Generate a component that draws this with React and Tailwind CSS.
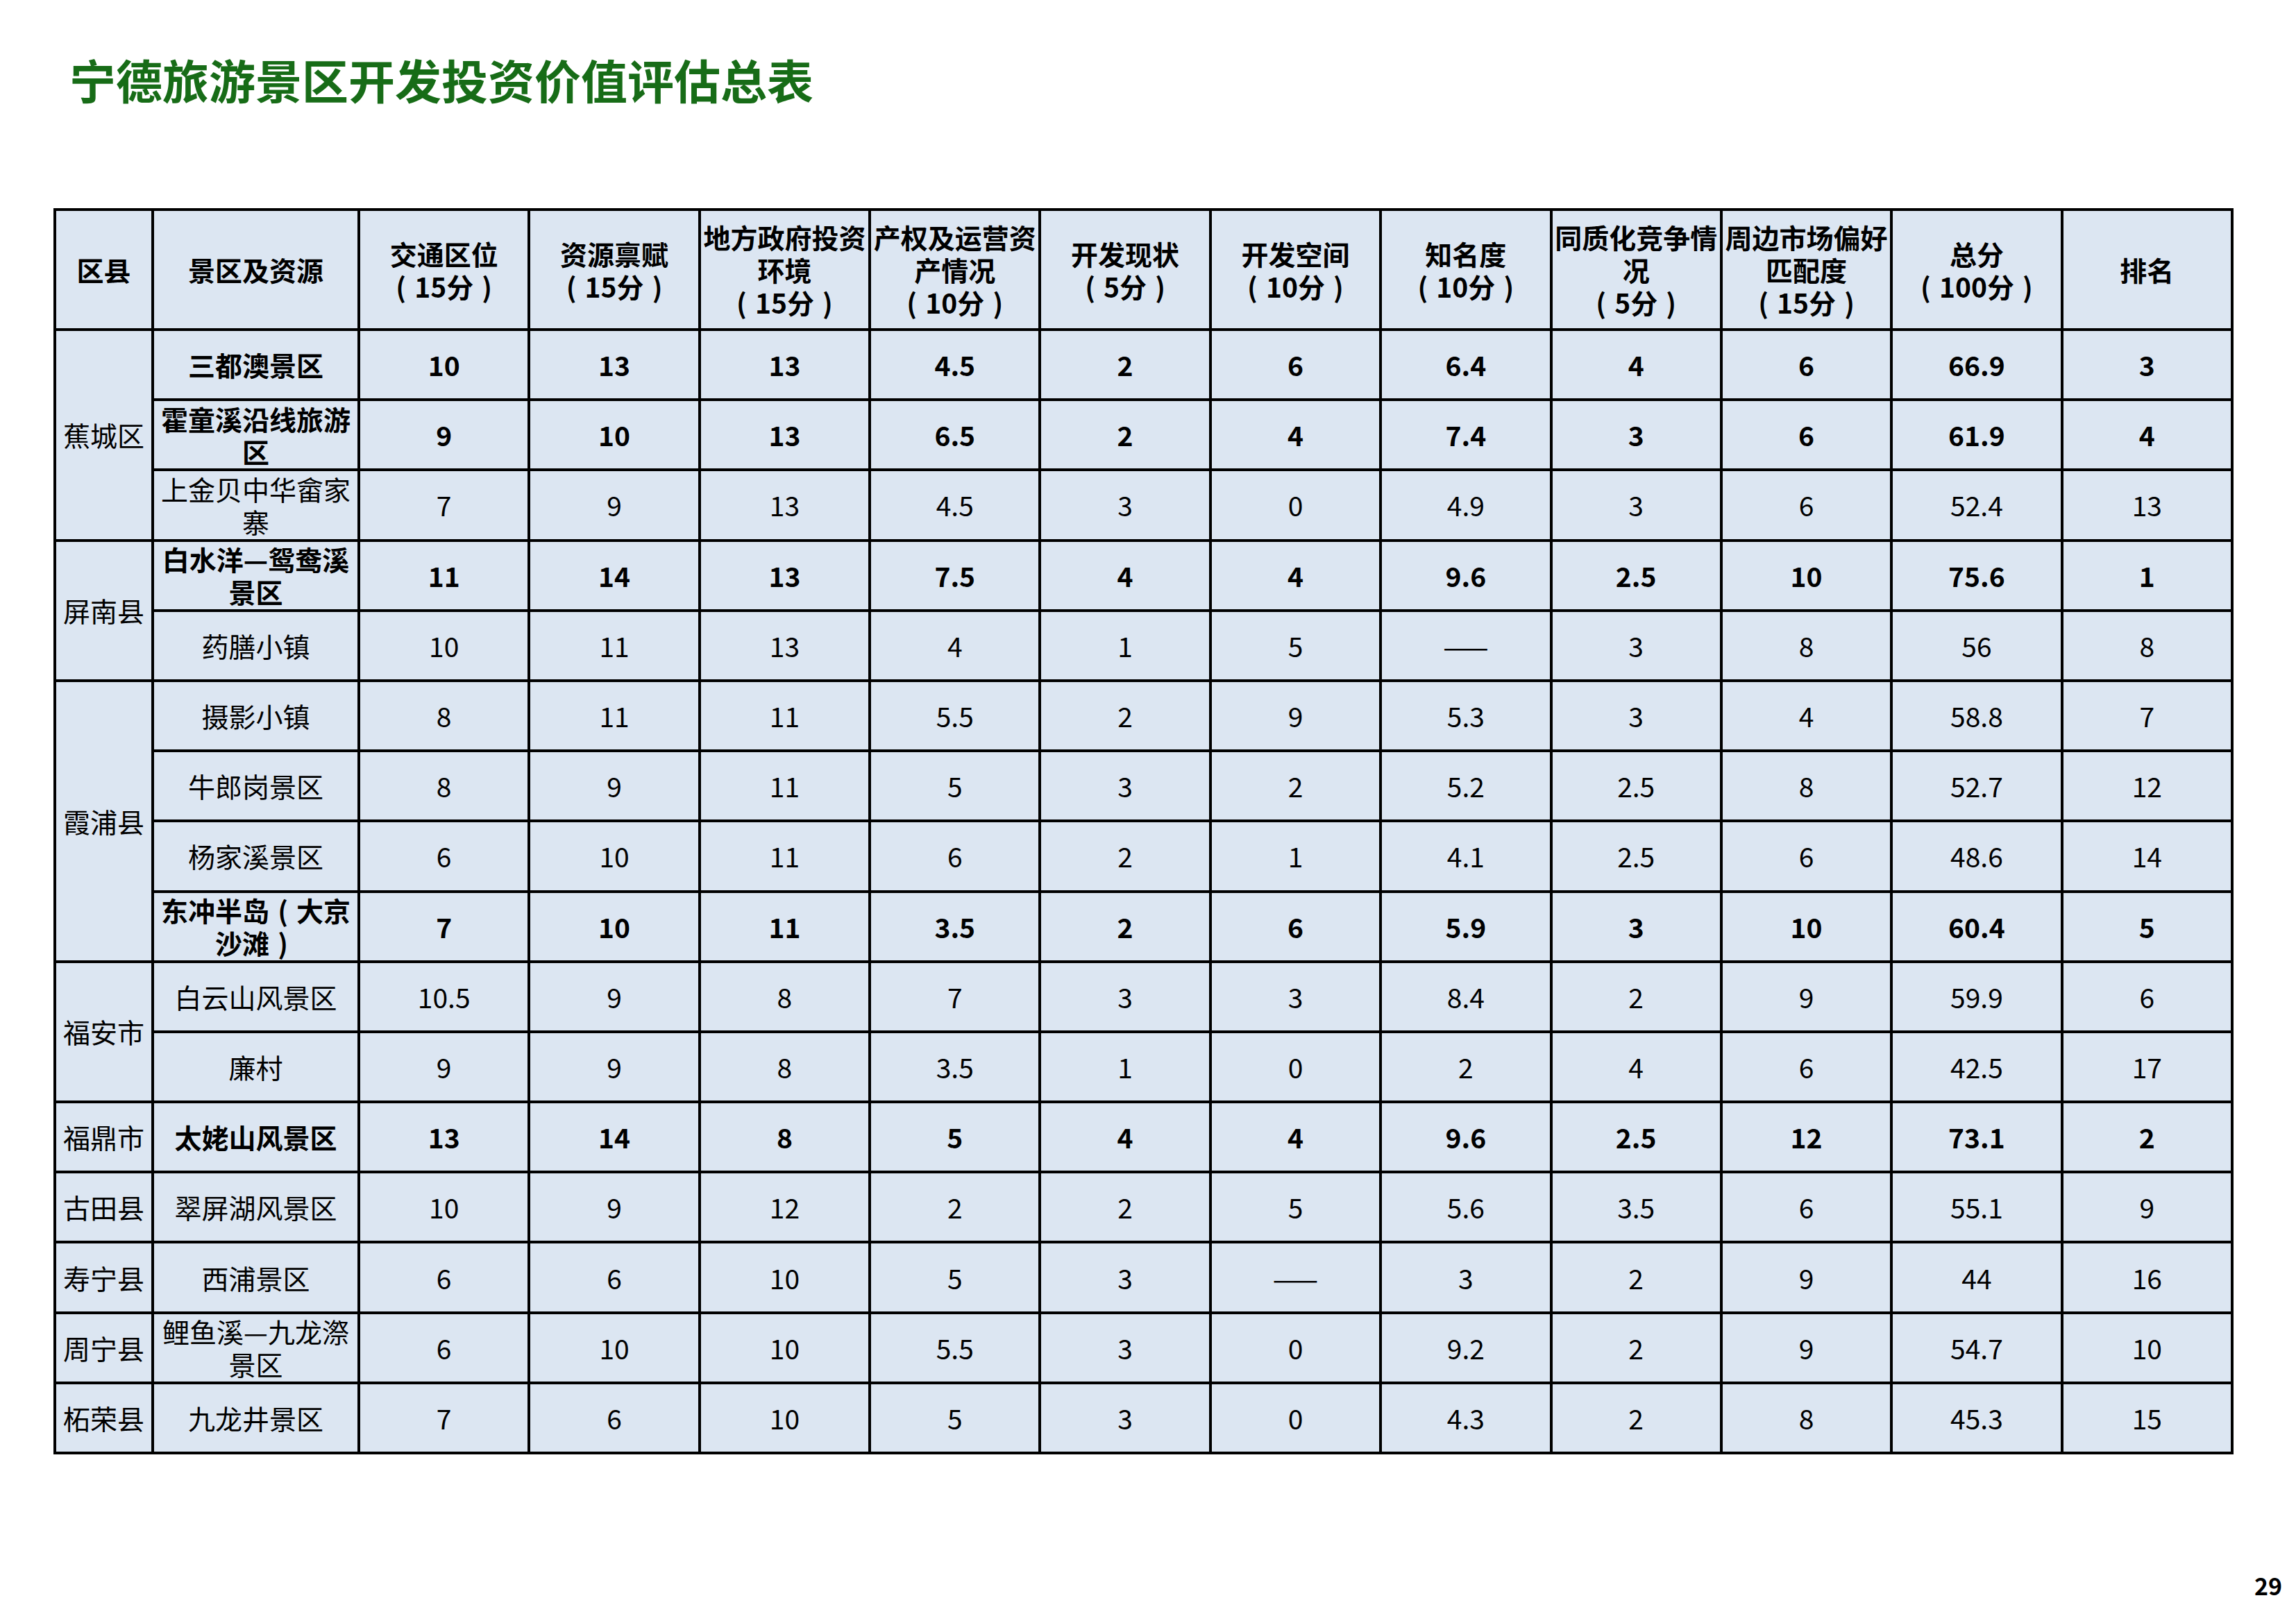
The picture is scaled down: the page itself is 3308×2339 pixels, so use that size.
import React from "react";

const rows = [
  { d: "蕉城区", span: 3, name: ["三都澳景区"], b: true, v: ["10", "13", "13", "4.5", "2", "6", "6.4", "4", "6", "66.9", "3"] },
  { name: ["霍童溪沿线旅游", "区"], b: true, v: ["9", "10", "13", "6.5", "2", "4", "7.4", "3", "6", "61.9", "4"] },
  { name: ["上金贝中华畲家", "寨"], v: ["7", "9", "13", "4.5", "3", "0", "4.9", "3", "6", "52.4", "13"] },
  { d: "屏南县", span: 2, name: ["白水洋—鸳鸯溪", "景区"], b: true, v: ["11", "14", "13", "7.5", "4", "4", "9.6", "2.5", "10", "75.6", "1"] },
  { name: ["药膳小镇"], v: ["10", "11", "13", "4", "1", "5", "——", "3", "8", "56", "8"] },
  { d: "霞浦县", span: 4, name: ["摄影小镇"], v: ["8", "11", "11", "5.5", "2", "9", "5.3", "3", "4", "58.8", "7"] },
  { name: ["牛郎岗景区"], v: ["8", "9", "11", "5", "3", "2", "5.2", "2.5", "8", "52.7", "12"] },
  { name: ["杨家溪景区"], v: ["6", "10", "11", "6", "2", "1", "4.1", "2.5", "6", "48.6", "14"] },
  { name: ["东冲半岛（大京", "沙滩）"], b: true, v: ["7", "10", "11", "3.5", "2", "6", "5.9", "3", "10", "60.4", "5"] },
  { d: "福安市", span: 2, name: ["白云山风景区"], v: ["10.5", "9", "8", "7", "3", "3", "8.4", "2", "9", "59.9", "6"] },
  { name: ["廉村"], v: ["9", "9", "8", "3.5", "1", "0", "2", "4", "6", "42.5", "17"] },
  { d: "福鼎市", span: 1, name: ["太姥山风景区"], b: true, v: ["13", "14", "8", "5", "4", "4", "9.6", "2.5", "12", "73.1", "2"] },
  { d: "古田县", span: 1, name: ["翠屏湖风景区"], v: ["10", "9", "12", "2", "2", "5", "5.6", "3.5", "6", "55.1", "9"] },
  { d: "寿宁县", span: 1, name: ["西浦景区"], v: ["6", "6", "10", "5", "3", "——", "3", "2", "9", "44", "16"] },
  { d: "周宁县", span: 1, name: ["鲤鱼溪—九龙漈", "景区"], v: ["6", "10", "10", "5.5", "3", "0", "9.2", "2", "9", "54.7", "10"] },
  { d: "柘荣县", span: 1, name: ["九龙井景区"], v: ["7", "6", "10", "5", "3", "0", "4.3", "2", "8", "45.3", "15"] },
];

const headers = [
  ["区县"],
  ["景区及资源"],
  ["交通区位", "（15分）"],
  ["资源禀赋", "（15分）"],
  ["地方政府投资", "环境", "（15分）"],
  ["产权及运营资", "产情况", "（10分）"],
  ["开发现状", "（5分）"],
  ["开发空间", "（10分）"],
  ["知名度", "（10分）"],
  ["同质化竞争情", "况", "（5分）"],
  ["周边市场偏好", "匹配度", "（15分）"],
  ["总分", "（100分）"],
  ["排名"],
];

function Text({ s }) {
  const parts = s.split(/([（）])/);
  return parts.map((p, i) => {
    if (p === "（")
      return (
        <span key={i} className="inline-block w-[1em] text-center">
          (
        </span>
      );
    if (p === "）")
      return (
        <span key={i} className="inline-block w-[1em] text-center">
          )
        </span>
      );
    return <React.Fragment key={i}>{p}</React.Fragment>;
  });
}

function Lines({ lines }) {
  return lines.map((l, i) => (
    <div key={i} className="whitespace-nowrap">
      <Text s={l} />
    </div>
  ));
}

export default function App() {
  return (
    <div className="relative w-[3308px] h-[2339px] bg-white font-['Noto_Sans_CJK_SC',sans-serif] text-black">
      <div className="pl-[100px] pt-[80px] h-[300px]">
        <h1 className="text-[67px] leading-none font-bold text-[#176c17]">宁德旅游景区开发投资价值评估总表</h1>
      </div>
      <div className="pl-[77px]">
        <table className="table-fixed border-collapse border-4 border-black w-[3137px] text-[39px] leading-[47px]">
          <colgroup>
            <col className="w-[141px]" />
            <col className="w-[297px]" />
            {Array.from({ length: 11 }).map((_, i) => (
              <col key={i} className="w-[245.36px]" />
            ))}
          </colgroup>
          <thead>
            <tr className="h-[173px]">
              {headers.map((h, i) => (
                <th key={i} className="border-4 border-black bg-[#dce6f2] font-bold text-center align-middle p-0">
                  <Lines lines={h} />
                </th>
              ))}
            </tr>
          </thead>
          <tbody>
            {rows.map((r, i) => (
              <tr key={i} className="h-[101.2px]">
                {r.d && (
                  <td rowSpan={r.span} className="border-4 border-black bg-[#dce6f2] text-center align-middle p-0 font-normal">
                    {r.d}
                  </td>
                )}
                <td className={`border-4 border-black bg-[#dce6f2] text-center align-middle p-0 ${r.b ? "font-bold" : "font-normal"}`}>
                  <Lines lines={r.name} />
                </td>
                {r.v.map((v, j) => (
                  <td key={j} className={`border-4 border-black bg-[#dce6f2] text-center align-middle p-0 ${r.b ? "font-bold" : "font-normal"}`}>
                    {v}
                  </td>
                ))}
              </tr>
            ))}
          </tbody>
        </table>
      </div>
      <div className="absolute right-[20px] top-[2268px] text-[34px] leading-none font-bold">29</div>
    </div>
  );
}
